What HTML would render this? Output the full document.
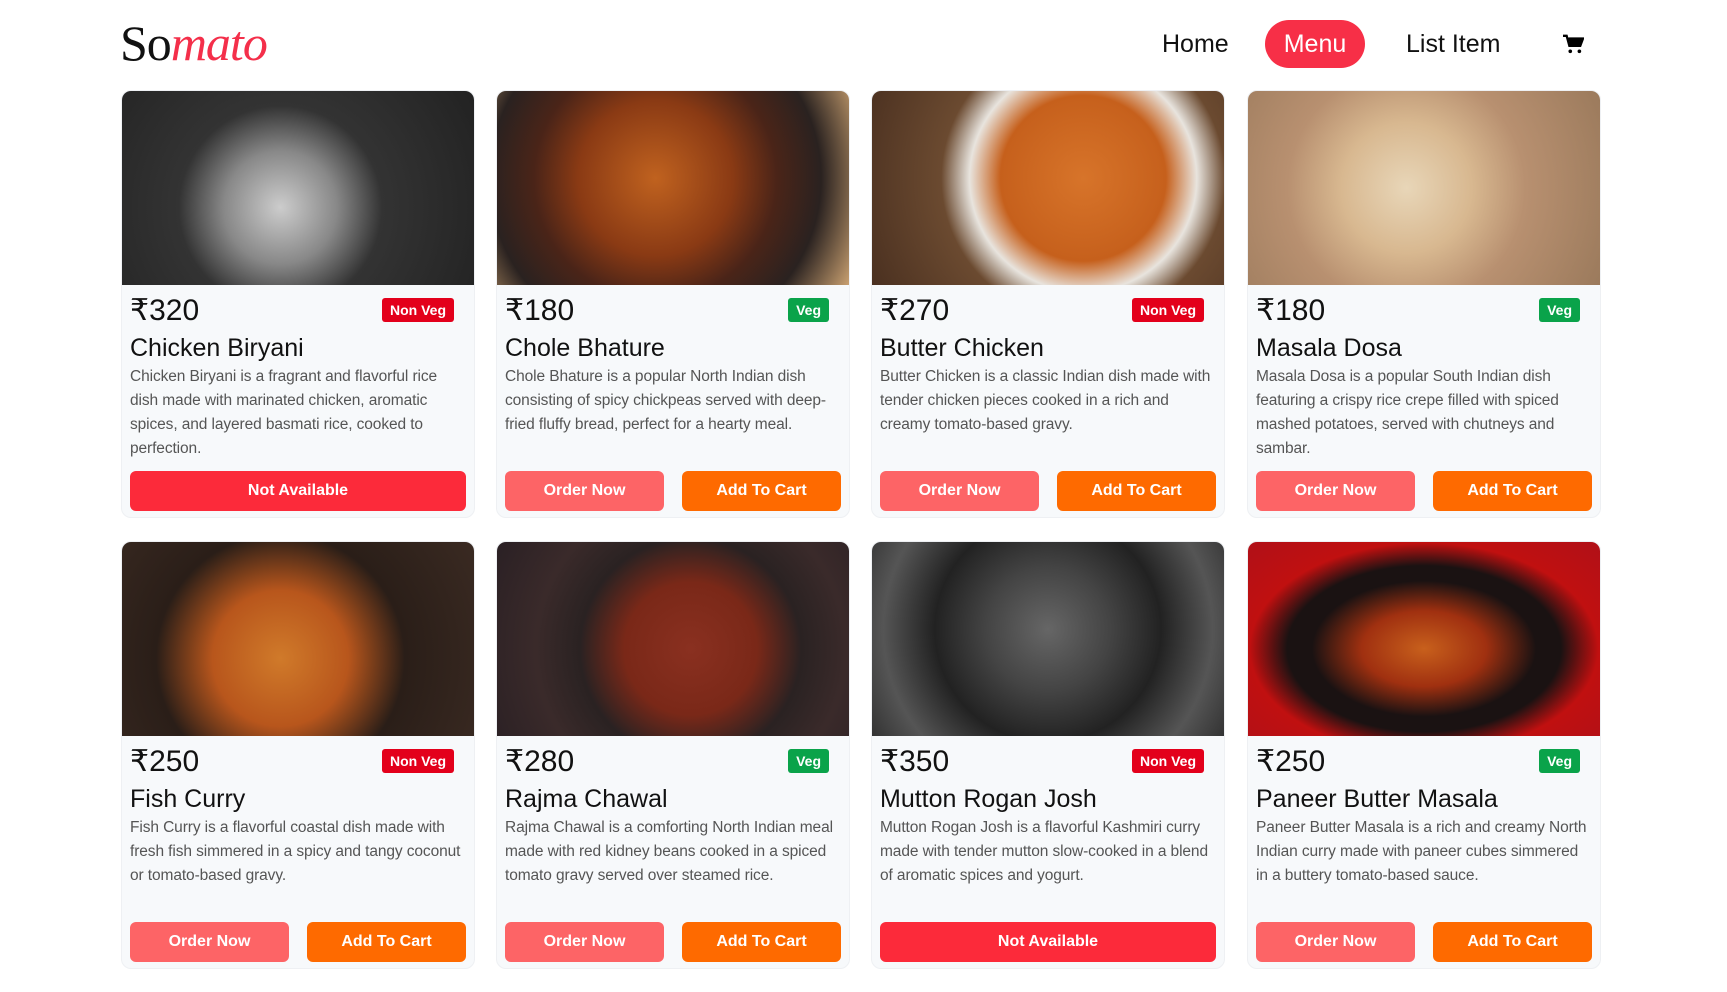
<!DOCTYPE html>
<html><head><meta charset="utf-8"><style>
*{box-sizing:border-box;margin:0;padding:0}
body{width:1727px;height:992px;background:#fff;font-family:"Liberation Sans",sans-serif;position:relative;overflow:hidden}
.logo{position:absolute;left:120px;top:14px;font-family:"Liberation Serif",serif;font-size:50px;letter-spacing:-1px}
.logo .a{color:#111}.logo .b{color:#f42f4a;font-style:italic}
.nav{position:absolute;top:20px;height:48px;font-size:25px;line-height:48px;color:#111}
.menu{background:#f72f47;color:#fff;border-radius:24px;text-align:center}
.card{position:absolute;width:354px;height:428px;background:#f7f9fb;border-radius:10px;border:1px solid #eef0f3;overflow:hidden;display:flex;flex-direction:column}
.img{height:194px;flex:none}
.body{padding:0 8px 6px;display:flex;flex-direction:column;flex:1}
.top{display:flex;justify-content:space-between;align-items:center;margin-top:10px;height:30px;padding-right:12px}
.price{font-size:30px;color:#111}
.badge{color:#fff;font-weight:bold;font-size:14px;padding:4px 8px;border-radius:3px}
.nv{background:#e3001b}.v{background:#0aa34a}
.title{font-size:25px;color:#111;margin-top:8px;line-height:30px}
.desc{font-size:15.5px;color:#555;line-height:24px;margin-top:2px;letter-spacing:-0.1px}
.btns{margin-top:auto;display:flex;justify-content:space-between}
.btn{height:40px;border-radius:6px;color:#fff;font-weight:bold;font-size:16px;display:flex;align-items:center;justify-content:center}
.o{background:#fd6466;width:159px}.c{background:#fe6a00;width:159px}.na{background:#fc2a3a;width:100%}
</style></head><body>
<div class="logo"><span class="a">So</span><span class="b">mato</span></div>
<div class="nav" style="left:1162px">Home</div>
<div class="nav menu" style="left:1265px;width:100px">Menu</div>
<div class="nav" style="left:1406px">List Item</div>
<svg style="position:absolute;left:1562px;top:34px" width="22" height="20" viewBox="0 0 24 22"><path d="M1 2h4l3 11h12l3-8H7" fill="none" stroke="#000" stroke-width="2.5"/><path d="M7 5h16l-3 8H9z" fill="#000"/><circle cx="9" cy="19" r="2"/><circle cx="19" cy="19" r="2"/></svg>

<div class="card" style="left:121px;top:90px"><div class="img" style="background:radial-gradient(circle at 45% 60%,#ccc 0,#888 25%,#333 45%,#222 100%)"></div><div class="body"><div class="top"><span class="price">₹320</span><span class="badge nv">Non Veg</span></div><div class="title">Chicken Biryani</div><div class="desc">Chicken Biryani is a fragrant and flavorful rice dish made with marinated chicken, aromatic spices, and layered basmati rice, cooked to perfection.</div><div class="btns"><div class="btn na">Not Available</div></div></div></div>

<div class="card" style="left:496px;top:90px"><div class="img" style="background:radial-gradient(circle at 45% 45%,#c0621f 0,#8a3a14 35%,#4a2418 55%,#2a2220 75%,#c9a070 100%)"></div><div class="body"><div class="top"><span class="price">₹180</span><span class="badge v">Veg</span></div><div class="title">Chole Bhature</div><div class="desc">Chole Bhature is a popular North Indian dish consisting of spicy chickpeas served with deep-fried fluffy bread, perfect for a hearty meal.</div><div class="btns"><div class="btn o">Order Now</div><div class="btn c">Add To Cart</div></div></div></div>

<div class="card" style="left:871px;top:90px"><div class="img" style="background:radial-gradient(circle at 60% 45%,#d7742a 0,#c6601c 35%,#e8e4de 48%,#6b4a30 60%,#4a3020 100%)"></div><div class="body"><div class="top"><span class="price">₹270</span><span class="badge nv">Non Veg</span></div><div class="title">Butter Chicken</div><div class="desc">Butter Chicken is a classic Indian dish made with tender chicken pieces cooked in a rich and creamy tomato-based gravy.</div><div class="btns"><div class="btn o">Order Now</div><div class="btn c">Add To Cart</div></div></div></div>

<div class="card" style="left:1247px;top:90px"><div class="img" style="background:radial-gradient(circle at 45% 50%,#e8d6b8 0,#d8b890 30%,#b89070 55%,#9b7a5c 100%)"></div><div class="body"><div class="top"><span class="price">₹180</span><span class="badge v">Veg</span></div><div class="title">Masala Dosa</div><div class="desc">Masala Dosa is a popular South Indian dish featuring a crispy rice crepe filled with spiced mashed potatoes, served with chutneys and sambar.</div><div class="btns"><div class="btn o">Order Now</div><div class="btn c">Add To Cart</div></div></div></div>

<div class="card" style="left:121px;top:541px"><div class="img" style="background:radial-gradient(circle at 45% 60%,#d07a2a 0,#b8561c 30%,#2a1e18 55%,#3a2a22 100%)"></div><div class="body"><div class="top"><span class="price">₹250</span><span class="badge nv">Non Veg</span></div><div class="title">Fish Curry</div><div class="desc">Fish Curry is a flavorful coastal dish made with fresh fish simmered in a spicy and tangy coconut or tomato-based gravy.</div><div class="btns"><div class="btn o">Order Now</div><div class="btn c">Add To Cart</div></div></div></div>

<div class="card" style="left:496px;top:541px"><div class="img" style="background:radial-gradient(circle at 55% 55%,#8a3020 0,#7a2818 30%,#2a2222 50%,#3a2a2a 70%,#2a2024 100%)"></div><div class="body"><div class="top"><span class="price">₹280</span><span class="badge v">Veg</span></div><div class="title">Rajma Chawal</div><div class="desc">Rajma Chawal is a comforting North Indian meal made with red kidney beans cooked in a spiced tomato gravy served over steamed rice.</div><div class="btns"><div class="btn o">Order Now</div><div class="btn c">Add To Cart</div></div></div></div>

<div class="card" style="left:871px;top:541px"><div class="img" style="background:radial-gradient(circle at 50% 45%,#666 0,#444 30%,#222 55%,#555 80%,#333 100%)"></div><div class="body"><div class="top"><span class="price">₹350</span><span class="badge nv">Non Veg</span></div><div class="title">Mutton Rogan Josh</div><div class="desc">Mutton Rogan Josh is a flavorful Kashmiri curry made with tender mutton slow-cooked in a blend of aromatic spices and yogurt.</div><div class="btns"><div class="btn na">Not Available</div></div></div></div>

<div class="card" style="left:1247px;top:541px"><div class="img" style="background:radial-gradient(ellipse at 50% 55%,#c8601c 0,#a03010 25%,#1a1212 45%,#1a1212 55%,#c01010 70%,#b01018 100%)"></div><div class="body"><div class="top"><span class="price">₹250</span><span class="badge v">Veg</span></div><div class="title">Paneer Butter Masala</div><div class="desc">Paneer Butter Masala is a rich and creamy North Indian curry made with paneer cubes simmered in a buttery tomato-based sauce.</div><div class="btns"><div class="btn o">Order Now</div><div class="btn c">Add To Cart</div></div></div></div>
</body></html>
